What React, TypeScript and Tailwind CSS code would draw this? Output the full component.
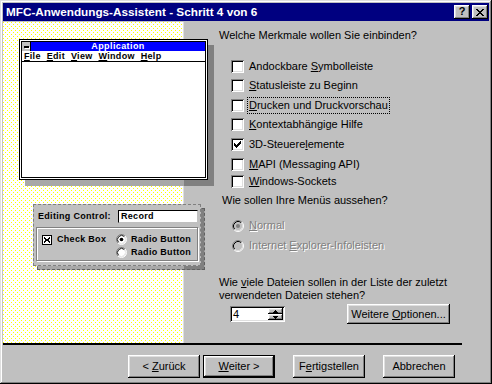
import React from "react";

const font = "font-['Liberation_Sans',Arial,sans-serif]";
const raised =
  "shadow-[inset_-1px_-1px_#000,inset_1px_1px_#fff,inset_-2px_-2px_#808080,inset_2px_2px_#dfdfdf]";
const sunken =
  "shadow-[inset_1px_1px_#808080,inset_-1px_-1px_#fff,inset_2px_2px_#000,inset_-2px_-2px_#dfdfdf]";

// tiny pixel glyph, drawn from rows of "X"
function Pix({ rows, color = "#000" }: { rows: string[]; color?: string }) {
  const w = rows[0].length;
  const h = rows.length;
  return (
    <svg width={w} height={h} viewBox={`0 0 ${w} ${h}`} shapeRendering="crispEdges" className="block">
      {rows.flatMap((r, y) =>
        r.split("").map((c, x) =>
          c === "X" ? <rect key={`${x}-${y}`} x={x} y={y} width="1" height="1" fill={color} /> : null
        )
      )}
    </svg>
  );
}

const checkMark = ["......X", ".....XX", "X...XXX", "XX.XXX.", "XXXXX..", ".XXX...", "..X...."];
const closeX = ["XX....XX", ".XX..XX.", "..XXXX..", "...XX...", "..XXXX..", ".XX..XX.", "XX....XX"];
const arrowUp = ["..X..", ".XXX.", "XXXXX"];
const arrowDown = ["XXXXX", ".XXX.", "..X.."];

function Check({ checked }: { checked?: boolean }) {
  return (
    <div className={`w-[13px] h-[13px] shrink-0 bg-white ${sunken} flex items-center justify-center`}>
      {checked && <Pix rows={checkMark} />}
    </div>
  );
}

function Radio({ on, disabled, size = 12 }: { on?: boolean; disabled?: boolean; size?: number }) {
  return (
    <svg width={size} height={size} viewBox="0 0 12 12" className="block shrink-0">
      <circle cx="6" cy="6" r="5" fill={disabled ? "#c0c0c0" : "#fff"} />
      <path d="M2.11 9.89 A5.5 5.5 0 0 1 9.89 2.11" stroke="#808080" fill="none" />
      <path d="M9.89 2.11 A5.5 5.5 0 0 1 2.11 9.89" stroke="#fff" fill="none" />
      <path d="M2.82 9.18 A4.5 4.5 0 0 1 9.18 2.82" stroke="#000" fill="none" />
      <path d="M9.18 2.82 A4.5 4.5 0 0 1 2.82 9.18" stroke="#dfdfdf" fill="none" />
      {on && <circle cx="6" cy="6" r="2" fill={disabled ? "#808080" : "#000"} />}
    </svg>
  );
}

const U = ({ children }: { children: React.ReactNode }) => <span className="underline underline-offset-[1px]">{children}</span>;

function TitleBar() {
  return (
    <div className="h-[18px] bg-[#000080] flex items-center pl-[3px] pr-[1px]">
      <span className="text-white font-bold text-[11.75px] leading-none">MFC-Anwendungs-Assistent - Schritt 4 von 6</span>
      <div className="ml-auto flex gap-[2px]">
        <div className={`w-[16px] h-[14px] bg-[#c0c0c0] ${raised} flex items-center justify-center text-[11px] font-bold leading-none pb-[1px]`}>?</div>
        <div className={`w-[16px] h-[14px] bg-[#c0c0c0] ${raised} flex items-center justify-center`}>
          <Pix rows={closeX} />
        </div>
      </div>
    </div>
  );
}

const menuItems = ["File", "Edit", "View", "Window", "Help"];

function Illustration() {
  return (
    <div className="relative w-[181px] h-[321px] shrink-0 bg-white border-r border-[#dfdfdf]">
      <svg className="absolute inset-0" width="180" height="321" shapeRendering="crispEdges">
        <defs>
          <pattern id="dots" width="4" height="4" patternUnits="userSpaceOnUse">
            <rect x="0" y="0" width="1" height="1" fill="#ffff00" />
            <rect x="2" y="2" width="1" height="1" fill="#ffff00" />
          </pattern>
        </defs>
        <rect width="180" height="321" fill="url(#dots)" />
      </svg>

      {/* app window shadow + window */}
      <div className="absolute left-[22px] top-[23px] w-[189px] h-[141px] bg-[linear-gradient(to_right,#a8a8a8_159px,#808080_159px)]" />
      <div className="absolute left-[16px] top-[17px] w-[189px] h-[141px] border border-black bg-white p-[1px]">
        <div className="h-full border border-black flex flex-col">
          <div className="flex h-[9px]">
            <div className="w-[9px] bg-[#c0c0c0] border-r border-black flex items-center justify-center">
              <div className="w-[5px] h-[2px] bg-black shadow-[1px_1px_#fff]" />
            </div>
            <div className="flex-1 bg-[#0000ff] flex items-center justify-center text-white font-bold text-[9px] leading-none tracking-[0.4px]">
              Application
            </div>
          </div>
          <div className="h-[11px] border-b border-black flex items-center pl-[2px] gap-[6px] font-bold text-[9px] leading-none tracking-[0.3px]">
            {menuItems.map((m) => (
              <span key={m}>
                <U>{m[0]}</U>
                {m.slice(1)}
              </span>
            ))}
          </div>
          <div className="flex-1 bg-white" />
        </div>
      </div>

      {/* editing control panel */}
      <div className="absolute left-[34px] top-[186px] w-[168px] h-[62px] border border-dashed border-[#606060] bg-[linear-gradient(to_right,#a8a8a8_146px,#808080_146px)]" />
      <div className="absolute left-[30px] top-[182px] w-[168px] h-[62px] border border-dashed border-[#808080] bg-[#c0c0c0] px-[2px] pt-[3px] font-bold text-[9px] leading-[11px] tracking-[0.3px]">
        <div className="flex items-center h-[17px]">
          <span className="ml-[2px]">Editing Control:</span>
          <div className="ml-auto w-[80px] h-[13px] bg-white border border-black border-r-[#c0c0c0] border-b-[#c0c0c0] flex items-center pl-[2px]">
            Record
          </div>
        </div>
        <div className="mt-[2px] h-[34px] border border-[#808080] shadow-[1px_1px_#fff,inset_1px_1px_#fff] pl-[5px] pt-[5px] grid grid-cols-[74px_1fr] auto-rows-[13px]">
          <div className="flex items-center gap-[5px]">
            <div className="w-[10px] h-[10px] border border-black bg-white flex items-center justify-center">
              <Pix rows={["X....X", "XX..XX", ".XXXX.", ".XXXX.", "XX..XX", "X....X"]} />
            </div>
            <span>Check Box</span>
          </div>
          <div className="flex items-center gap-[4px]">
            <Radio on size={11} />
            <span>Radio Button</span>
          </div>
          <div />
          <div className="flex items-center gap-[4px]">
            <Radio size={11} />
            <span>Radio Button</span>
          </div>
        </div>
      </div>
    </div>
  );
}

const features = [
  { pre: "Andockbare ", u: "S", post: "ymbolleiste", h: "h-[19px]" },
  { pre: "", u: "S", post: "tatusleiste zu Beginn", h: "h-[20px]" },
  { pre: "", u: "D", post: "rucken und Druckvorschau", h: "h-[19px]", focus: true },
  { pre: "", u: "K", post: "ontextabhängige Hilfe", h: "h-[20px]" },
  { pre: "3D-Steuere", u: "l", post: "emente", h: "h-[20px]", checked: true },
  { pre: "", u: "M", post: "API (Messaging API)", h: "h-[17px]" },
  { pre: "", u: "W", post: "indows-Sockets", h: "h-[13px]" },
];

function Options() {
  return (
    <div className="flex-1 flex flex-col pl-[35px] pt-[7px]">
      <div>Welche Merkmale wollen Sie einbinden?</div>
      <div className="flex flex-col ml-[12px] mt-[18px]">
        {features.map((f, i) => (
          <div key={i} className={`flex items-start gap-[5px] ${f.h}`}>
            <Check checked={f.checked} />
            {f.focus ? (
              <span className="border border-dotted border-black px-[1px] py-[1px] -ml-[2px] -mt-[2px]">
                {f.pre}
                <U>{f.u}</U>
                {f.post}
              </span>
            ) : (
              <span>
                {f.pre}
                <U>{f.u}</U>
                {f.post}
              </span>
            )}
          </div>
        ))}
      </div>

      <div className="ml-[3px] mt-[6px]">Wie sollen Ihre Menüs aussehen?</div>
      <div className="flex flex-col ml-[13px] mt-[12px] gap-[7px] text-[#808080] [text-shadow:1px_1px_#fff]">
        <div className="flex items-center gap-[5px] h-[13px]">
          <Radio on disabled />
          <span>
            <U>N</U>ormal
          </span>
        </div>
        <div className="flex items-center gap-[5px] h-[13px]">
          <Radio disabled />
          <span>
            Internet <U>E</U>xplorer-Infoleisten
          </span>
        </div>
      </div>

      <div className="mt-[24px]">
        Wie <U>v</U>iele Dateien sollen in der Liste der zuletzt
        <br />
        verwendeten Dateien stehen?
      </div>
      <div className="flex items-center h-[20px] mt-[2px]">
        <div className={`ml-[11px] w-[55px] h-[16px] bg-white ${sunken} flex items-center p-[2px]`}>
          <span className="flex-1 pl-[1px]">4</span>
          <div className="flex flex-col w-[15px] h-full">
            <div className={`flex-1 bg-[#c0c0c0] ${raised} flex items-center justify-center`}>
              <Pix rows={arrowUp} />
            </div>
            <div className={`flex-1 bg-[#c0c0c0] ${raised} flex items-center justify-center`}>
              <Pix rows={arrowDown} />
            </div>
          </div>
        </div>
        <div className={`ml-[62px] w-[103px] h-[20px] bg-[#c0c0c0] ${raised} flex items-center justify-center`}>
          <span>
            Weitere <U>O</U>ptionen...
          </span>
        </div>
      </div>
    </div>
  );
}

function Button({ children, def }: { children: React.ReactNode; def?: boolean }) {
  return (
    <div className={`w-[72px] h-[23px] ${def ? "border border-black" : ""}`}>
      <div className={`w-full h-full bg-[#c0c0c0] ${raised} flex items-center justify-center`}>
        <span>{children}</span>
      </div>
    </div>
  );
}

export default function App() {
  return (
    <div
      className={`w-[492px] h-[384px] bg-[#c0c0c0] p-[3px] flex flex-col overflow-hidden text-[11px] leading-[13px] text-black ${font} shadow-[inset_-1px_-1px_#000,inset_1px_1px_#dfdfdf,inset_-2px_-2px_#808080,inset_2px_2px_#fff]`}
    >
      <TitleBar />
      <div className="flex mt-[1px] h-[321px]">
        <Illustration />
        <Options />
      </div>
      <div className="h-[2px] w-[459px] bg-black shrink-0" />
      <div className="flex mt-[10px] ml-[125px]">
        <Button>
          &lt; <U>Z</U>urück
        </Button>
        <div className="ml-[3px]">
          <Button def>
            <U>W</U>eiter &gt;
          </Button>
        </div>
        <div className="ml-[18px]">
          <Button>
            F<U>e</U>rtigstellen
          </Button>
        </div>
        <div className="ml-[18px]">
          <Button>Abbrechen</Button>
        </div>
      </div>
    </div>
  );
}
